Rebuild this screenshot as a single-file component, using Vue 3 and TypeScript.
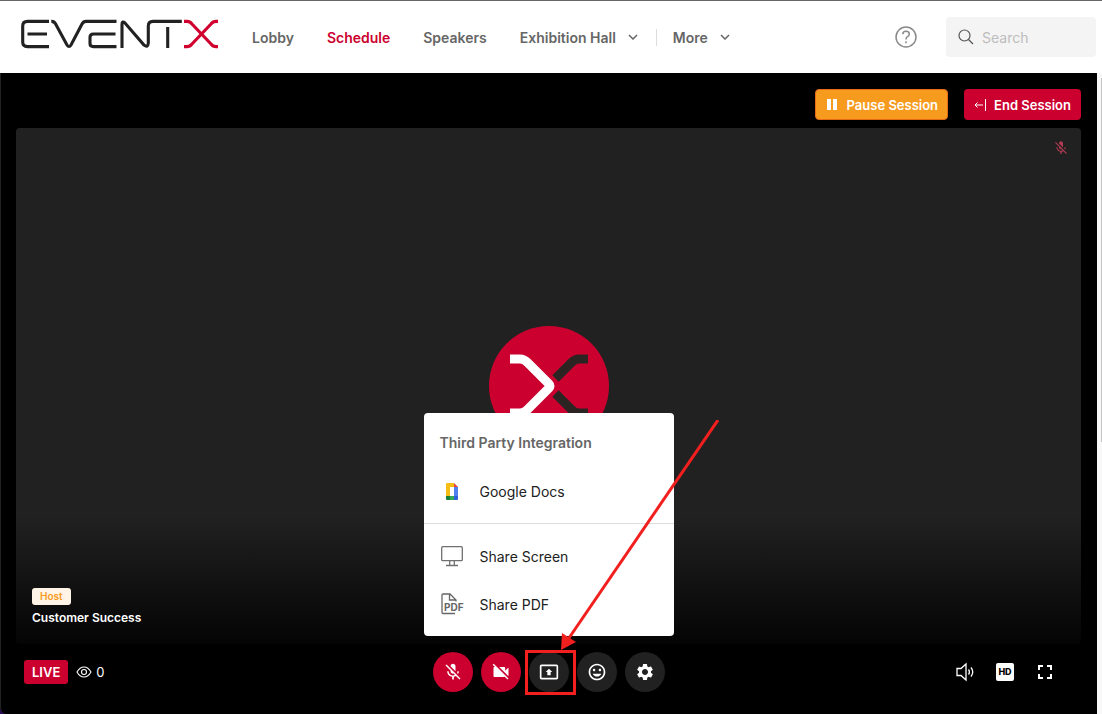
<script setup lang="ts">
import { ref } from 'vue'

interface NavItem {
  label: string
  active?: boolean
}

const links: NavItem[] = [
  { label: 'Lobby' },
  { label: 'Schedule', active: true },
  { label: 'Speakers' },
]
const query = ref('')
const viewers = ref(0)
const shareOpen = ref(true)

const micOff =
  'M19 11h-1.7c0 .74-.16 1.43-.43 2.05l1.23 1.23c.56-.98.9-2.09.9-3.28zm-4.02.17c0-.06.02-.11.02-.17V5c0-1.66-1.34-3-3-3S9 3.34 9 5v.18l5.98 5.99zM4.27 3L3 4.27l6.01 6.01V11c0 1.66 1.33 3 2.99 3 .22 0 .44-.03.65-.08l1.66 1.66c-.71.33-1.5.52-2.31.52-2.76 0-5.3-2.1-5.3-5.1H5c0 3.41 2.72 6.23 6 6.72V21h2v-3.28c.91-.13 1.77-.45 2.54-.9L19.73 21 21 19.73 4.27 3z'
const camOff =
  'M21 6.5l-4 4V7c0-.55-.45-1-1-1H9.82L21 17.18V6.5zM3.27 2L2 3.27 4.73 6H4c-.55 0-1 .45-1 1v10c0 .55.45 1 1 1h12c.21 0 .39-.08.54-.18L19.73 21 21 19.73 3.27 2z'
const present =
  'M21 3H3c-1.11 0-2 .89-2 2v14c0 1.1.89 2 2 2h18c1.1 0 2-.9 2-2V5c0-1.11-.9-2-2-2zm0 16.02H3V4.98h18v14.04zM10 12H8l4-4 4 4h-2v4h-4v-4z'
const smile =
  'M11.99 2C6.47 2 2 6.48 2 12s4.47 10 9.99 10C17.52 22 22 17.52 22 12S17.52 2 11.99 2zM12 20c-4.42 0-8-3.58-8-8s3.58-8 8-8 8 3.58 8 8-3.58 8-8 8zm3.5-9c.83 0 1.5-.67 1.5-1.5S16.33 8 15.5 8 14 8.67 14 9.5s.67 1.5 1.5 1.5zm-7 0c.83 0 1.5-.67 1.5-1.5S9.33 8 8.5 8 7 8.67 7 9.5 7.67 11 8.5 11zm3.5 6.5c2.33 0 4.31-1.46 5.11-3.5H6.89c.8 2.04 2.78 3.5 5.11 3.5z'
const gear =
  'M19.14 12.94c.04-.3.06-.61.06-.94 0-.32-.02-.64-.07-.94l2.03-1.58c.18-.14.23-.41.12-.61l-1.92-3.32c-.12-.22-.37-.29-.59-.22l-2.39.96c-.5-.38-1.03-.7-1.62-.94l-.36-2.54c-.04-.24-.24-.41-.48-.41h-3.84c-.24 0-.43.17-.47.41l-.36 2.54c-.59.24-1.13.57-1.62.94l-2.39-.96c-.22-.08-.47 0-.59.22L2.74 8.87c-.12.21-.08.47.12.61l2.03 1.58c-.05.3-.09.63-.09.94s.02.64.07.94l-2.03 1.58c-.18.14-.23.41-.12.61l1.92 3.32c.12.22.37.29.59.22l2.39-.96c.5.38 1.03.7 1.62.94l.36 2.54c.05.24.24.41.48.41h3.84c.24 0 .44-.17.47-.41l.36-2.54c.59-.24 1.13-.56 1.62-.94l2.39.96c.22.08.47 0 .59-.22l1.92-3.32c.12-.22.07-.47-.12-.61l-2.01-1.58zM12 15.6c-1.98 0-3.6-1.62-3.6-3.6s1.62-3.6 3.6-3.6 3.6 1.62 3.6 3.6-1.62 3.6-3.6 3.6z'
</script>

<template>
  <div class="page">
    <header class="header">
      <a class="logo" href="#" aria-label="EventX">
        <svg width="198" height="30" viewBox="21 19 198 30" fill="none" stroke-width="3.1">
          <g stroke="#222">
            <path d="M49 21.4H27.5Q22.7 21.4 22.7 26V42Q22.7 46.6 27.5 46.6H49M27.5 34H47" />
            <path d="M51.3 21.4Q54 21.2 55.5 23.8L67 45Q69 48 71 45L82 24Q83.4 21.4 86 21.4H116.5" />
            <path d="M115.5 34H93.5Q90 34 90 37.3V43.5Q90 46.6 93.5 46.6H116.5" />
            <path d="M122 48V24Q122 20.5 125 23L144 45Q148 48 148.3 43V26Q148.3 21.4 153 21.4H181.800M167.7 27V48" />
          </g>
          <g stroke="#d0002f">
            <path d="M184 21.4H187Q190 21.4 192 24L211 44Q213 46.6 216 46.6H218" />
            <path d="M184 46.6H187Q190 46.6 192 44L211 24Q213 21.4 216 21.4H218" />
          </g>
        </svg>
      </a>
      <nav class="nav">
        <a v-for="l in links" :key="l.label" href="#" :class="{ active: l.active }">{{ l.label }}</a>
        <button type="button" class="drop">
          Exhibition Hall
          <svg width="10" height="6" viewBox="0 0 10 6"><path d="M1 1l4 4 4-4" /></svg>
        </button>
        <button type="button" class="drop more">
          More
          <svg width="10" height="6" viewBox="0 0 10 6"><path d="M1 1l4 4 4-4" /></svg>
        </button>
      </nav>
      <button type="button" class="help" aria-label="Help">
        <svg width="22" height="22" viewBox="0 0 22 22" fill="none" stroke="#8a8a8a" stroke-width="1.5">
          <circle cx="11" cy="11" r="10" />
          <path d="M7.8 8.2Q7.8 5.3 11 5.3Q14.3 5.3 14.3 8.2Q14.3 9.8 12.5 10.7Q11 11.5 11 13.5M11 15.2v2" />
        </svg>
      </button>
      <label class="search">
        <svg width="16" height="16" viewBox="0 0 16 16" fill="none" stroke="#555" stroke-width="1.2">
          <circle cx="6.5" cy="6.5" r="5.5" />
          <path d="M10.5 10.5L15 15" />
        </svg>
        <input v-model="query" type="search" placeholder="Search" aria-label="Search" />
      </label>
    </header>

    <main class="session">
      <div class="actions">
        <button type="button" class="action pause">
          <svg width="10" height="11" viewBox="0 0 10 11"><path d="M0 0h4v11H0zM6 0h4v11H6z" fill="#fff" /></svg>
          Pause Session
        </button>
        <button type="button" class="action end">
          <svg width="12" height="12" viewBox="0 0 12 12" fill="none" stroke="#fff">
            <path d="M9 6H1M3.500 3.500L1 6l2.500 2.500M11.500 0v12" />
          </svg>
          End Session
        </button>
      </div>

      <section class="video">
        <svg class="muted" viewBox="0 0 24 24" fill="#b03a52"><path :d="micOff" /></svg>
        <svg class="avatar" viewBox="0 0 120 120" fill="none">
          <circle cx="60" cy="60" r="60" fill="#cc002f" />
          <g stroke-width="9">
            <path stroke="#2b2422" d="M99 33H90Q86 33 82.500 36.500L66.500 52.500M66.500 67.500L82.500 83.500Q86 87 90 87H99" />
            <path stroke="#fff" d="M21 33H31Q35 33 38.500 36.500L60 58Q62 60 60 62L38.500 83.500Q35 87 31 87H21" />
          </g>
        </svg>
        <div class="caption">
          <span class="tag">Host</span>
          <span class="name">Customer Success</span>
        </div>
      </section>

      <footer class="bar">
        <div class="status">
          <span class="live">LIVE</span>
          <svg width="16" height="12" viewBox="0 0 16 12" fill="none" stroke="#fff" stroke-width="1.1">
            <path d="M1 6Q3.800 1 8 1T15 6Q12.200 11 8 11T1 6z" />
            <circle cx="8" cy="6" r="2.5" />
          </svg>
          <span class="count">{{ viewers }}</span>
        </div>

        <div class="controls">
          <button type="button" class="round red" aria-label="Unmute"><svg viewBox="0 0 24 24"><path :d="micOff" /></svg></button>
          <button type="button" class="round red" aria-label="Start video"><svg viewBox="0 0 24 24"><path :d="camOff" /></svg></button>
          <div class="share">
            <button type="button" class="round" aria-label="Share" @click="shareOpen = !shareOpen"><svg viewBox="0 0 24 24"><path :d="present" /></svg></button>
            <div v-if="shareOpen" class="menu">
              <h2>Third Party Integration</h2>
              <button type="button" class="item">
                <svg width="24" height="24" viewBox="0 0 24 24">
                  <path fill="#f5bd16" d="M7 4h7v4h-4v9H6V5q0-1 1-1z" />
                  <path fill="#ea4335" d="M14 4l4 4h-4z" />
                  <path fill="#527ff0" d="M14 8h4v9h-4z" />
                  <path fill="#188038" d="M6 17h4v4H7q-1 0-1-1z" />
                  <path fill="#34a853" d="M10 17h4v4h-4z" />
                  <path fill="#2e62d9" d="M14 17h4v3q0 1-1 1h-3z" />
                </svg>
                Google Docs
              </button>
              <hr />
              <button type="button" class="item">
                <svg width="24" height="24" viewBox="0 0 24 24" fill="none" stroke="#707070" stroke-width="1.3">
                  <rect x="1.7" y="2.7" width="20.6" height="14" rx="1" />
                  <path d="M9.700 17v4M14.300 17v4M6 21.500h12" />
                </svg>
                Share Screen
              </button>
              <button type="button" class="item">
                <svg width="24" height="24" viewBox="0 0 24 24" fill="none" stroke="#666" stroke-width="1.3">
                  <path d="M15 21.500H3Q2 21.500 2 20.500V3Q2 2 3 2H10L16 8V9.500M9.500 2V8H16" />
                  <text class="pdf" x="4" y="19">PDF</text>
                </svg>
                Share PDF
              </button>
            </div>
            <div class="highlight"></div>
            <svg class="arrow" width="158" height="230" viewBox="0 0 158 230">
              <path d="M157 0L8 218" stroke="#f21f1f" stroke-width="3" />
              <path d="M0 230L1 213L15 222z" fill="#f21f1f" />
            </svg>
          </div>
          <button type="button" class="round" aria-label="Reactions"><svg viewBox="0 0 24 24"><path :d="smile" /></svg></button>
          <button type="button" class="round" aria-label="Settings"><svg viewBox="0 0 24 24"><path :d="gear" /></svg></button>
        </div>

        <div class="tools">
          <button type="button" aria-label="Volume">
            <svg width="20" height="20" viewBox="0 0 20 20" fill="none" stroke="#fff" stroke-width="1.3">
              <path d="M2 6.500H6L11 2V18L6 13.500H2zM13.500 7.500Q15.300 10 13.500 12.500M16 5.500Q19.500 10 16 14.500" />
            </svg>
          </button>
          <button type="button" class="hd">HD</button>
          <button type="button" aria-label="Full screen">
            <svg width="20" height="20" viewBox="0 0 20 20" fill="none" stroke="#fff" stroke-width="2">
              <path d="M4 8V4H8M12 4H16V8M16 12V16H12M8 16H4V12" />
            </svg>
          </button>
        </div>
      </footer>
    </main>
  </div>
</template>

<style>
body {
  margin: 0;
}
</style>

<style scoped>
.page {
  box-sizing: border-box;
  display: flex;
  flex-direction: column;
  min-height: 100vh;
  background:
    linear-gradient(#2a0a5e, #2a0a5e) left bottom / 8px 8px no-repeat,
    linear-gradient(#c4c4c4, #c4c4c4) right 78px / 1px 51% no-repeat,
    #f8f8f8;
  font-family: Inter, "Liberation Sans", sans-serif;
  font-size: 14px;
}
button {
  padding: 0;
  border: 0;
  background: none;
  font: inherit;
  color: inherit;
}
a {
  color: inherit;
  text-decoration: none;
}
svg {
  display: block;
  flex: none;
}
.header {
  display: flex;
  align-items: center;
  height: 72px;
  padding: 0 6px 0 21px;
  border-top: 1px solid #666;
  background: #fff;
}
.logo {
  margin: 0 33px 6px 0;
}
.nav {
  display: flex;
  align-items: center;
  gap: 33px;
  flex: 1;
  font-weight: 600;
  color: #666;
}
.active {
  color: #cc002f;
}
.drop {
  display: flex;
  align-items: center;
  gap: 12px;
}
.drop path {
  fill: none;
  stroke: #666;
  stroke-width: 1.5;
}
.more {
  margin-left: -15px;
  padding-left: 16px;
  border-left: 1px solid #ddd;
}
.help {
  margin-right: 29px;
}
.search {
  box-sizing: border-box;
  display: flex;
  align-items: center;
  gap: 8px;
  width: 150px;
  height: 40px;
  padding: 0 12px;
  border-radius: 4px;
  background: #f4f4f4;
}
.search input {
  flex: 1;
  min-width: 0;
  padding: 0;
  border: 0;
  outline: 0;
  background: none;
  font: inherit;
}
.search input::placeholder {
  color: #bdbdbd;
}
.session {
  display: flex;
  flex-direction: column;
  flex: 1;
  margin-right: 5px;
  padding: 16px 16px 0 15px;
  border-left: 1px solid #222;
  border-bottom-left-radius: 6px;
  background: #000;
}
.actions {
  display: flex;
  justify-content: flex-end;
  gap: 16px;
  margin-bottom: 8px;
}
.action {
  box-sizing: border-box;
  display: flex;
  align-items: center;
  height: 31px;
  border-radius: 4px;
  color: #fff;
  font-size: 13px;
  font-weight: 600;
}
.pause {
  gap: 10px;
  padding: 0 9px 0 11px;
  border: 1px solid #e86a17;
  background: #f69b1e;
}
.end {
  gap: 8px;
  padding: 0 10px;
  background: #cc002f;
}
.video {
  position: relative;
  display: flex;
  align-items: center;
  justify-content: center;
  flex: 1;
  min-height: 240px;
  border-radius: 4px;
  background: linear-gradient(to top, #040404, #212121 128px);
}
.avatar {
  width: 120px;
  height: 120px;
}
.muted {
  position: absolute;
  top: 12px;
  right: 12px;
  width: 16px;
  height: 16px;
}
.caption {
  position: absolute;
  left: 16px;
  bottom: 16px;
  display: flex;
  flex-direction: column;
  align-items: flex-start;
  gap: 3px;
  color: #fff;
  font-weight: 600;
}
.tag {
  padding: 0 8px;
  border-radius: 3px;
  background: #fff4e5;
  color: #f69b1e;
  font-size: 10px;
  line-height: 17px;
}
.name {
  font-size: 12px;
  line-height: 20px;
}
.bar {
  display: grid;
  grid-template-columns: 1fr auto 1fr;
  align-items: center;
  box-sizing: border-box;
  height: 70px;
  padding: 8px 8px 22px;
}
.status {
  display: flex;
  align-items: center;
  gap: 8px;
  color: #fff;
}
.live {
  padding: 0 8px;
  border-radius: 3px;
  background: #cc002f;
  font-size: 13px;
  font-weight: 600;
  line-height: 24px;
}
.count {
  font-size: 13px;
  margin-left: -4px;
}
.controls {
  display: flex;
  gap: 8px;
}
.round {
  display: grid;
  place-items: center;
  width: 40px;
  height: 40px;
  border-radius: 50%;
  background: #212121;
}
.round svg {
  width: 20px;
  height: 20px;
  fill: #fff;
}
.red {
  background: #cc002f;
}
.share {
  position: relative;
}
.menu {
  position: absolute;
  bottom: 56px;
  left: 50%;
  box-sizing: border-box;
  width: 250px;
  margin-left: -125px;
  padding: 6px 0 8px;
  border-radius: 4px;
  background: #fff;
  color: #212121;
}
.menu h2 {
  margin: 0;
  padding: 0 16px;
  color: #666;
  font-size: 14px;
  font-weight: 600;
  line-height: 48px;
}
.menu hr {
  margin: 8px 0;
  border: 0;
  border-top: 1px solid #ddd;
}
.item {
  display: flex;
  align-items: center;
  gap: 16px;
  width: 100%;
  height: 48px;
  padding: 0 16px;
}
.pdf {
  fill: #666;
  stroke: none;
  font-size: 10px;
  font-weight: 700;
}
.highlight {
  position: absolute;
  inset: -2px -7px -3px -4px;
  border: 3px solid #f21f1f;
  pointer-events: none;
}
.arrow {
  position: absolute;
  left: 32px;
  bottom: 42px;
  pointer-events: none;
}
.tools {
  display: flex;
  justify-content: flex-end;
  align-items: center;
  gap: 20px;
  padding-right: 18px;
}
.hd {
  width: 18px;
  margin: 0 1px;
  border-radius: 2px;
  background: #fff;
  color: #000;
  font-size: 9px;
  font-weight: 800;
  line-height: 18px;
}
</style>
